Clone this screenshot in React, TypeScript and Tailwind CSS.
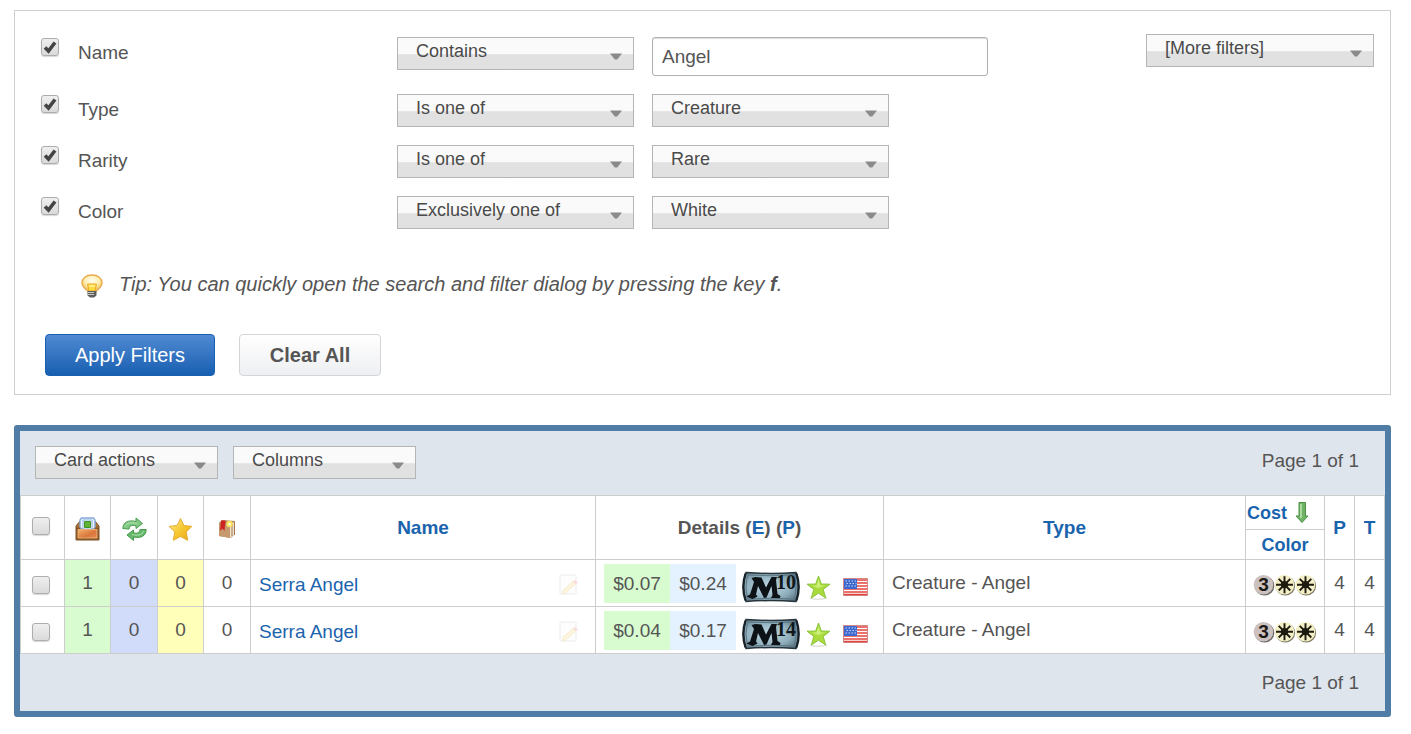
import React, { useState } from "react";

const filters = [
  { name: "Name", operator: "Contains", value: "Angel", kind: "text" },
  { name: "Type", operator: "Is one of", value: "Creature", kind: "select" },
  { name: "Rarity", operator: "Is one of", value: "Rare", kind: "select" },
  { name: "Color", operator: "Exclusively one of", value: "White", kind: "select" },
];

const cards = [
  { id: 1, name: "Serra Angel", low: "$0.07", mid: "$0.24", set: "10", type: "Creature - Angel" },
  { id: 2, name: "Serra Angel", low: "$0.04", mid: "$0.17", set: "14", type: "Creature - Angel" },
];

type SelectProps = { label: string; options: string[]; className: string };

function Select({ label, options, className }: SelectProps) {
  return (
    <div className={`relative ${className}`}>
      <select
        aria-label={label}
        className="block h-[33px] w-full appearance-none border border-[#b5b5b5] bg-linear-to-b from-[#fafafa] from-50% to-[#e1e1e1] to-54% pr-8 pb-[5px] pl-[18px] text-[18px] leading-[26px] text-[#4a4a4a]"
      >
        {options.map((o) => (
          <option key={o}>{o}</option>
        ))}
      </select>
      <svg
        className="pointer-events-none absolute top-4 right-3 h-[7px] w-3"
        viewBox="0 0 12 7"
      >
        <path d="M0 .5h12L7.200 6.500H4.800z" fill="#8a8a8a" />
      </svg>
    </div>
  );
}

function Checkbox({ label, id, checked = false }: { label?: string; id?: string; checked?: boolean }) {
  return (
    <span className="relative block size-[18px]">
      <input
        type="checkbox"
        id={id}
        aria-label={label}
        defaultChecked={checked}
        className="peer block size-[18px] appearance-none rounded-[3px] border border-[#adadad] bg-linear-to-b from-[#efefef] to-[#dadada] shadow-[0_1px_1px_#d8d8d8]"
      />
      <svg
        className="pointer-events-none absolute inset-0 hidden size-[18px] peer-checked:block"
        viewBox="0 0 18 18"
      >
        <path d="M4 9.500l3.500 3.500L14 4.500" fill="none" stroke="#444" strokeWidth="3.600" />
      </svg>
    </span>
  );
}

function BulbIcon() {
  return (
    <svg className="mt-[5px] h-[24px] w-[22px]" viewBox="0 0 22 24">
      <defs>
        <radialGradient id="bulb" cx=".5" cy=".35" r=".6">
          <stop offset="0" stopColor="#fffdf0" />
          <stop offset=".6" stopColor="#fdeeb0" />
          <stop offset="1" stopColor="#f6c463" />
        </radialGradient>
      </defs>
      <path
        d="M11 1C5 1 1 4.500 1 9c0 4 3.500 5.500 5.500 8h9c2-2.500 5.500-4 5.500-8 0-4.500-4-8-10-8z"
        fill="url(#bulb)"
        stroke="#e9a94d"
        strokeWidth="1.300"
      />
      <path d="M6.500 10h9l-1.500 7H8z" fill="#fbdc3c" stroke="#eda82f" />
      <path d="M8 12h6" stroke="#fff3a0" strokeWidth="1.500" />
      <path d="M6.500 17h9v4.500l-2.500 2h-4l-2.500-2z" fill="#5e5e5a" />
      <path d="M7 18.500h6M7 20.500h6" stroke="#c9c9c4" />
    </svg>
  );
}

function BoxIcon() {
  return (
    <svg className="mx-auto size-[25px]" viewBox="0 0 25 25">
      <defs>
        <linearGradient id="box" x2="1" y2="1">
          <stop offset="0" stopColor="#f3b26c" />
          <stop offset=".6" stopColor="#d9763b" />
          <stop offset="1" stopColor="#e58b4e" />
        </linearGradient>
      </defs>
      <path d="M1 9l4-5h15l4 5v14H1z" fill="#a5713a" stroke="#7d5023" />
      <path d="M5 12V3l1.500-2h12L20 3v9z" fill="#eaf2fb" stroke="#86a9da" strokeWidth="1.400" />
      <path d="M8 12V3h9v9z" fill="#fff" stroke="#8fb0dc" />
      <path d="M9.500 4.500h6v6h-6z" fill="#64b235" stroke="#3f9428" />
      <path d="M1 10.500h4.500V12h14v-1.500H24V23H1z" fill="#8b5626" />
      <path d="M3 12.500h19V21H3z" fill="url(#box)" stroke="#f0bb82" strokeWidth=".8" />
    </svg>
  );
}

function SwapIcon() {
  return (
    <svg className="mx-auto size-[25px]" viewBox="0 0 25 25">
      <g stroke="#479c4c" strokeLinejoin="round">
        <path d="M.8 11.500C1 5.500 6 2.500 14 4.500V1l6.500 5.500-6.500 5V8.700c-5-1-6.500.5-7 3.300z" fill="#82c985" />
        <path d="M24.200 12.500c-.2 6.500-5 9-12.700 7.500V23.500l-6.500-5.500 6.500-5v3c4.500.6 6-.5 6.500-3.500z" fill="#66b76b" />
      </g>
      <path d="M3 9.500c1.500-3.800 6-4.500 12-3M10 17.500c5 1.500 10 .5 12-3.500" fill="none" stroke="#b5e3b3" />
    </svg>
  );
}

function StarIcon() {
  return (
    <svg className="mx-auto size-[25px]" viewBox="0 0 25 25">
      <defs>
        <linearGradient id="gold" x2="1" y2="1">
          <stop offset="0" stopColor="#fff09a" />
          <stop offset=".5" stopColor="#f6c832" />
          <stop offset="1" stopColor="#eaa40f" />
        </linearGradient>
      </defs>
      <path
        d="M12.500 1.500l3.400 7 8 .9-5.700 5.500 1.500 8.400-7.200-3.800-7.200 3.800 1.500-8.400L1.100 9.400l8-.9z"
        fill="url(#gold)"
        stroke="#e5ab32"
        strokeLinejoin="round"
      />
    </svg>
  );
}

function BookIcon() {
  return (
    <svg className="mx-auto h-[21px] w-[18px]" viewBox="0 0 18 21">
      <path d="M1 4l3-3 13 1v13l-4 4-12-2z" fill="#b9895b" />
      <path d="M1 5l11 1v13L1 17z" fill="#c69a6d" />
      <path d="M12 6l4-3v13l-4 3z" fill="#eee1cf" />
      <path d="M14 5v12M16.500 3v13" stroke="#a7784b" />
      <path d="M3 1.500h4.500L6.500 12l-2-2.500L2 12z" fill="#cf2323" />
      <circle cx="11.500" cy="5" r="3.200" fill="#fae15a" />
      <circle cx="11.500" cy="5" r="1.500" fill="#fffbd0" />
    </svg>
  );
}

function ArrowDownIcon() {
  return (
    <svg className="h-[23px] w-[14px]" viewBox="0 0 14 23">
      <path d="M4 1.500h6.500V15H13l-6 6.500L1 15h3z" fill="#6fb365" stroke="#4d9146" strokeLinejoin="round" />
      <path d="M6 3v14" stroke="#b3dca7" strokeWidth="1.800" />
    </svg>
  );
}

function NoteIcon() {
  return (
    <svg className="h-[22px] w-5" viewBox="0 0 20 22">
      <path d="M1 1h16v19H1z" fill="#fdfdfd" stroke="#ececec" />
      <path d="M4 16.500l10-9 2.500 2.500-10 9-3 .8z" fill="#fdf6dd" stroke="#f4ead2" />
      <path d="M14 7.500l2-1.500 3 2.500-2.500 1.700z" fill="#fbdcd8" />
    </svg>
  );
}

// Core set badge, the number is the set year
function SetBadge({ year }: { year: string }) {
  return (
    <svg className="h-8 w-[58px]" viewBox="0 0 58 32" role="img" aria-label={`M${year}`}>
      <defs>
        <radialGradient id="plate" cx=".45" cy=".5" r=".7">
          <stop offset="0" stopColor="#c3dce7" />
          <stop offset=".6" stopColor="#8eadbb" />
          <stop offset="1" stopColor="#4c6573" />
        </radialGradient>
      </defs>
      <path d="M4 1.500Q29 3.500 54 1.500q5 14.500 0 29-25-2-50 0-5-14.500 0-29z" fill="url(#plate)" stroke="#26343c" strokeWidth="1.500" />
      <path d="M6 4q23 1.500 46 0 4 12 0 24-23-1.500-46 0-4-12 0-24z" fill="none" stroke="#5d7683" />
      <path d="M3.500 29.500Q-1 16 3.500 2.500M54.500 2.500q4.500 13.500 0 27" fill="none" stroke="#172127" strokeWidth="2.200" />
      <path
        d="M9.500 7l4-1 6 .5 4.500 10 5.500-10.500h5.500l-1 3 1.500 14 3 2-.5 2h-9l1.500-3-1-9-5 11.500-2.500.5-6-12-2 8.500 1.500 2-5 2.500-6-2.500 3.500-2 4-12.500z"
        fill="#0c1216"
      />
      <text
        x="34"
        y="18"
        fontFamily="Liberation Serif, serif"
        fontWeight="bold"
        fontSize="20"
        fill="#10181c"
      >
        {year}
      </text>
    </svg>
  );
}

function GreenStarIcon() {
  return (
    <svg className="size-[25px]" viewBox="0 0 25 25">
      <path d="M4 23q8 2.500 17 0" stroke="#e2e2dc" strokeWidth="1.500" fill="none" />
      <path
        d="M12.500 1l2.800 8 8.700.2-6.800 5.200 2.500 8.600-7.200-4.800L5.300 23l2.500-8.600L1 9.200 9.700 9z"
        fill="#a8db3b"
        stroke="#8cc43c"
        strokeLinejoin="round"
      />
      <path d="M12.500 4l1.800 6.500h5L12 13l-6-2.500h4.700z" fill="#cdf07a" />
    </svg>
  );
}

function FlagIcon() {
  return (
    <svg className="h-[18px] w-[25px]" viewBox="0 0 25 18">
      <path d="M.5.5h24v17H.5z" fill="#fff" />
      <path d="M1 2h23M1 5h23M1 8h23M1 11h23M1 14h23M1 16.500h23" stroke="#e2443c" strokeWidth="1.500" />
      <path d="M1 1h13v10H1z" fill="#3c68cf" />
      <path d="M2.500 3h11M3.500 5.500h10M2.500 8h11" stroke="#c4d5fa" strokeWidth="1.200" strokeDasharray="1.500 1.500" />
      <path d="M.5.500h24v17H.5z" fill="none" stroke="#c56a68" strokeWidth=".8" />
    </svg>
  );
}

function ManaCost() {
  return (
    <svg className="mx-auto h-[22px] w-16" viewBox="0 0 64 22" role="img" aria-label="3WW">
      <circle cx="11.500" cy="11.700" r="9.800" fill="#6b6563" />
      <circle cx="10.500" cy="10.700" r="9.800" fill="#cbc1bf" />
      <text
        x="10.500"
        y="17"
        textAnchor="middle"
        fontFamily="Liberation Sans, sans-serif"
        fontWeight="bold"
        fontSize="19"
        fill="#1c1816"
      >
        3
      </text>
      {[31.5, 52.5].map((cx) => (
        <g key={cx} transform={`translate(${cx} 10.7)`}>
          <circle cx=".8" cy="1" r="9.800" fill="#7c7964" />
          <circle r="9.800" fill="#f3efc6" />
          <path
            d="M0-8.500v17M-8.500 0h17M-5.800-5.800L5.800 5.800M5.800-5.800L-5.800 5.800"
            stroke="#1d1a10"
            strokeWidth="1.900"
          />
          <circle r="3.600" fill="#1d1a10" />
        </g>
      ))}
    </svg>
  );
}

const link = "text-[#1a63ad]";

export default function App() {
  const [search, setSearch] = useState("Angel");

  return (
    <div className="bg-white pt-[10px] pr-5 pb-4 pl-[14px] font-['Liberation_Sans',Arial,sans-serif] text-[19px] leading-6 text-[#555]">
      <form
        onSubmit={(e) => e.preventDefault()}
        className="border border-[#cfcfcf] pt-[23px] pr-4 pb-[18px] pl-[30px]"
      >
        <div className="flex items-start justify-between gap-4">
          <div className="-ml-1 min-w-0 pt-[3px]">
            {filters.map((f) => (
              <div key={f.name} className="flex items-start pb-[18px]">
                <div className="w-[37px] shrink-0 pt-px">
                  <Checkbox id={`use-${f.name}`} checked />
                </div>
                <label htmlFor={`use-${f.name}`} className="w-[319px] leading-8">
                  {f.name}
                </label>
                <Select
                  label={`${f.name} operator`}
                  options={[f.operator]}
                  className="mr-[18px] w-[237px]"
                />
                {f.kind === "text" ? (
                  <input
                    type="text"
                    aria-label={`${f.name} value`}
                    value={search}
                    onChange={(e) => setSearch(e.target.value)}
                    className="h-[39px] w-[336px] rounded-[3px] border border-[#b0b0b0] px-[9px] text-[19px] shadow-[inset_0_1px_1px_#ddd]"
                  />
                ) : (
                  <Select label={`${f.name} value`} options={[f.value]} className="w-[237px]" />
                )}
              </div>
            ))}
          </div>
          <Select label="Add a filter" options={["[More filters]"]} className="w-[228px] shrink-0" />
        </div>

        <p className="mt-[22px] flex items-center gap-4 pl-9 text-[20px] italic">
          <BulbIcon />
          <span>
            Tip: You can quickly open the search and filter dialog by pressing the key <b>f</b>.
          </span>
        </p>

        <div className="mt-9 flex gap-6">
          <button
            type="submit"
            className="h-[42px] w-[170px] rounded-[4px] border border-[#1a60b2] bg-linear-to-b from-[#4f8ad2] to-[#165fb1] text-[20px] text-white"
          >
            Apply Filters
          </button>
          <button
            type="reset"
            onClick={() => setSearch("")}
            className="h-[42px] w-[142px] rounded-[4px] border border-[#d3d5d8] bg-linear-to-b from-white to-[#eeeff2] text-[20px] font-bold text-[#555]"
          >
            Clear All
          </button>
        </div>
      </form>

      <section className="mt-[30px] rounded-[3px] border-6 border-[#507da5] bg-[#dfe5ed]">
        <div className="flex items-start gap-[15px] pt-[15px] pr-[26px] pb-4 pl-[15px]">
          <Select label="Card actions" options={["Card actions"]} className="w-[183px]" />
          <Select label="Columns" options={["Columns"]} className="w-[183px]" />
          <span className="ml-auto leading-[30px]">Page 1 of 1</span>
        </div>

        <table className="w-full table-fixed border-collapse bg-white text-center [&_td]:border [&_td]:border-[#cdcdcd] [&_th]:border [&_th]:border-[#cdcdcd]">
          <colgroup>
            <col className="w-11" />
            <col className="w-[46px]" />
            <col className="w-[47px]" />
            <col className="w-[46px]" />
            <col className="w-[47px]" />
            <col className="w-[345px]" />
            <col className="w-[288px]" />
            <col />
            <col className="w-[79px]" />
            <col className="w-[30px]" />
            <col className="w-[30px]" />
          </colgroup>
          <thead>
            <tr className="h-[34px]">
              <th rowSpan={2} className="pb-1 pl-[11px]">
                <Checkbox label="Select all cards" />
              </th>
              <th rowSpan={2} className="pt-1" aria-label="Inventory">
                <BoxIcon />
              </th>
              <th rowSpan={2} className="pt-1" aria-label="Tradelist">
                <SwapIcon />
              </th>
              <th rowSpan={2} className="pt-1" aria-label="Wishlist">
                <StarIcon />
              </th>
              <th rowSpan={2} className="pt-1" aria-label="Decks">
                <BookIcon />
              </th>
              <th rowSpan={2}>
                <a href="#name" className={link}>Name</a>
              </th>
              <th rowSpan={2}>
                Details (<a href="#edition" className={link}>E</a>) (
                <a href="#price" className={link}>P</a>)
              </th>
              <th rowSpan={2}>
                <a href="#type" className={link}>Type</a>
              </th>
              <th className="pl-px">
                <a href="#cost" className={`flex items-center gap-2 text-[18px] ${link}`}>
                  Cost <ArrowDownIcon />
                </a>
              </th>
              <th rowSpan={2}>
                <a href="#power" className={link}>P</a>
              </th>
              <th rowSpan={2}>
                <a href="#toughness" className={link}>T</a>
              </th>
            </tr>
            <tr className="h-[30px]">
              <th>
                <a href="#color" className={`text-[18px] ${link}`}>Color</a>
              </th>
            </tr>
          </thead>
          <tbody>
            {cards.map((c) => (
              <tr key={c.id} className="h-[47px]">
                <td className="pt-1 pl-[11px]">
                  <Checkbox label={`Select ${c.name} M${c.set}`} />
                </td>
                <td className="bg-[#d8fcd0]">1</td>
                <td className="bg-[#d0dcfa]">0</td>
                <td className="bg-[#ffffba]">0</td>
                <td>0</td>
                <td className="pt-1 pr-4 pl-2">
                  <div className="flex items-center justify-between">
                    <a href="#card" className={link}>{c.name}</a>
                    <button type="button" aria-label="Edit notes">
                      <NoteIcon />
                    </button>
                  </div>
                </td>
                <td className="pl-2">
                  <div className="flex h-[39px] items-center">
                    <span className="w-[66px] bg-[#d8fcd0] leading-[39px]">{c.low}</span>
                    <span className="mr-[6px] w-[66px] bg-[#e4f2ff] leading-[39px]">{c.mid}</span>
                    <div className="flex items-center pt-2">
                      <SetBadge year={c.set} />
                      <span className="mr-3 ml-[6px]">
                        <GreenStarIcon />
                      </span>
                      <FlagIcon />
                    </div>
                  </div>
                </td>
                <td className="pl-2 text-left">{c.type}</td>
                <td className="pt-1">
                  <ManaCost />
                </td>
                <td>4</td>
                <td>4</td>
              </tr>
            ))}
          </tbody>
        </table>

        <div className="pt-[14px] pr-[26px] pb-[13px] text-right leading-[30px]">Page 1 of 1</div>
      </section>
    </div>
  );
}
